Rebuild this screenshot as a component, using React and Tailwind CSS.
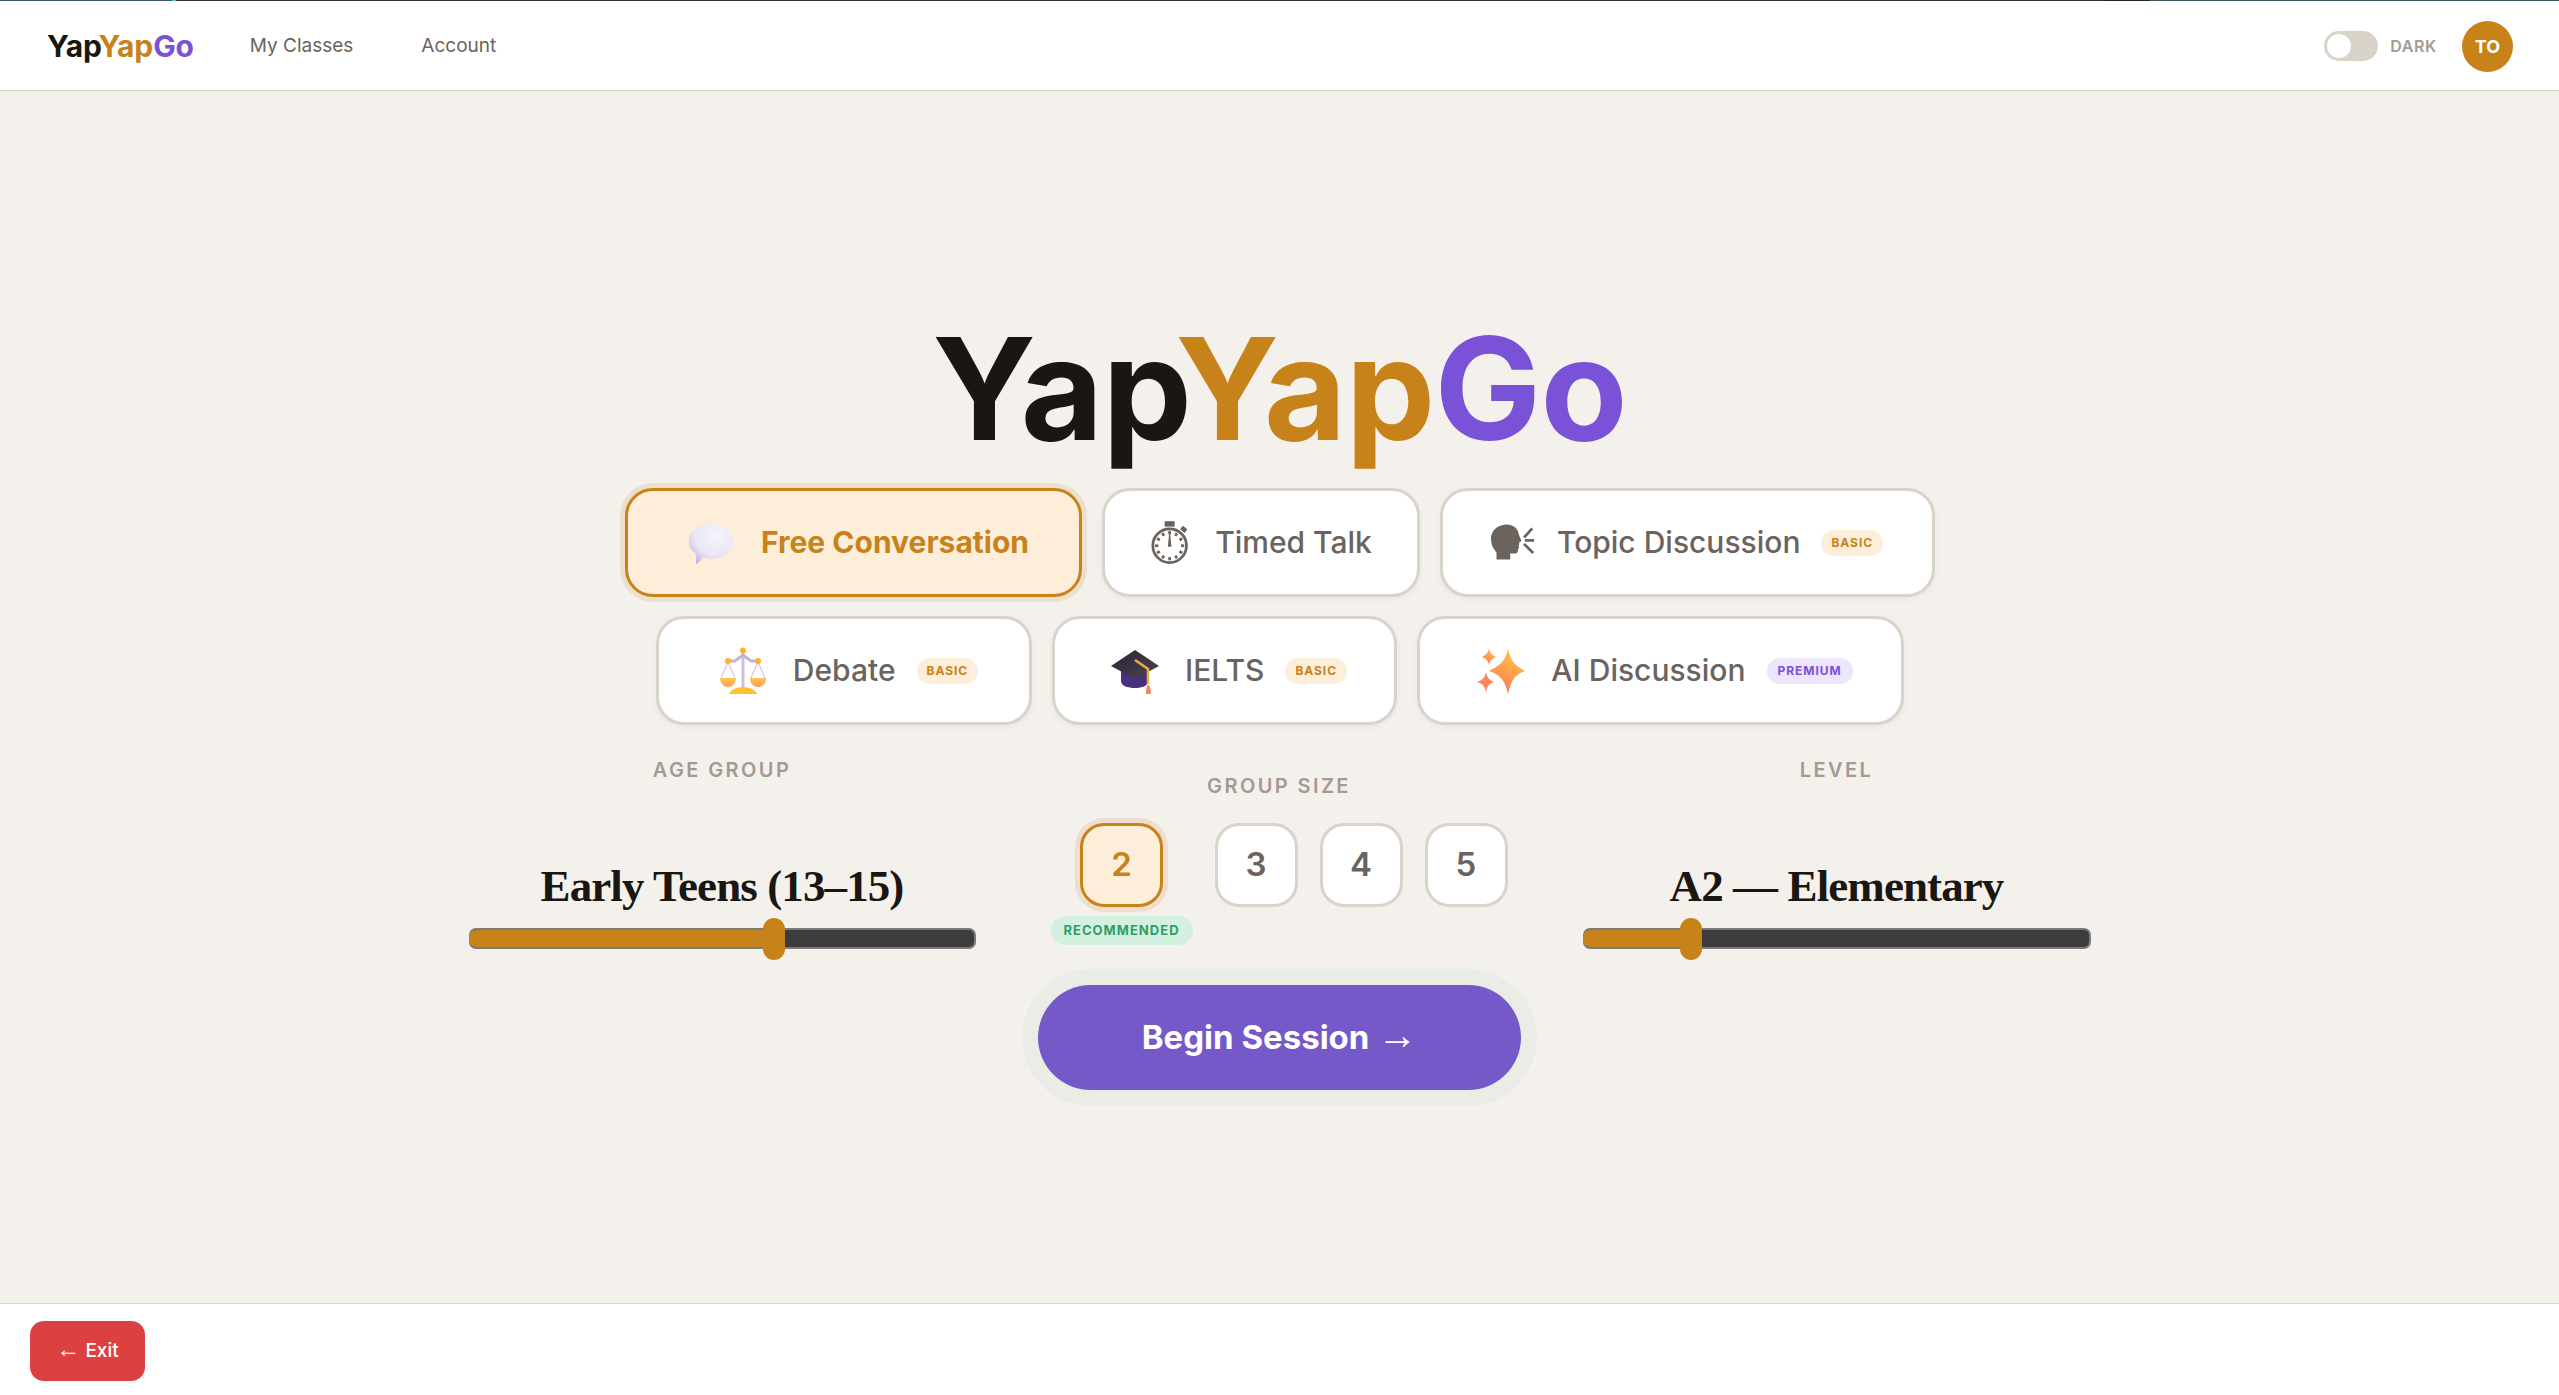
import { useState } from 'react';

const SANS = 'font-["Inter","Liberation_Sans",sans-serif]';

function Balloon() {
  return (
    <svg viewBox="0 0 48 48" className="w-[48px] h-[48px]">
      <defs>
        <radialGradient id="bal" cx="0.6" cy="0.3" r="0.8">
          <stop offset="0" stopColor="#f7f4fb" />
          <stop offset="0.6" stopColor="#ece6f6" />
          <stop offset="1" stopColor="#bfb0e4" />
        </radialGradient>
      </defs>
      <path d="M25 4C36 4 46 11 46 22C46 33 36 40 24 39.500C21 39.500 18 39 16 38C14 41 12 44 9 45C9 41 9 37 8.500 34.500C4 31 1 27 2 21C3 11 14 4 25 4Z" fill="url(#bal)" />
    </svg>
  );
}

function Stopwatch() {
  const ticks = Array.from({ length: 12 }, (_, i) => i * 30);
  return (
    <svg viewBox="0 0 44 48" className="w-[40px] h-[44px]" fill="none" stroke="#6b635d">
      <rect x="15" y="0" width="11" height="6" fill="#6b635d" stroke="none" />
      <path d="M35 5l5 4-3 4-5-4z" fill="#6b635d" stroke="none" />
      <circle cx="20.500" cy="27" r="18.500" strokeWidth="3" />
      {ticks.map((t) => (
        <line key={t} x1="20.500" y1="11" x2="20.500" y2="14.500" strokeWidth="3" transform={`rotate(${t} 20.500 27)`} />
      ))}
      <path d="M20.500 8L22.500 28H18.500z" fill="#6b635d" stroke="none" />
    </svg>
  );
}

function SpeakingHead() {
  return (
    <svg viewBox="0 0 48 40" className="w-[44px] h-[38px]" fill="#6b635d">
      <path d="M15 0C23 -1 29 4 30 9C30.500 12 32 14 33 17C33 19 31 19 30.500 19.500C31 21 31 22 30 23C31 24 30.500 26 29.500 26.500C30 30 28 32 24 31.500L21 31.500V38H6V30C3 27 0 22 0 15C0 7 6 1 15 0Z" />
      <path d="M45 4L36 14M47 17H37M46 31L36 21" stroke="#6b635d" strokeWidth="3" fill="none" />
    </svg>
  );
}

function Scales() {
  return (
    <svg viewBox="0 0 48 48" className="w-[48px] h-[48px]" fill="none">
      <defs>
        <linearGradient id="pan" x1="0" y1="0" x2="0" y2="1">
          <stop offset="0" stopColor="#ffc64d" />
          <stop offset="1" stopColor="#ff9e5e" />
        </linearGradient>
      </defs>
      <path d="M24 4V42" stroke="#cdbfd9" strokeWidth="3" />
      <path d="M9 14H16L24 8L32 14H39" stroke="#c2b2d4" strokeWidth="3" />
      <path d="M9 15L2 31M9 15L16 31M39 15L32 31M39 15L46 31" stroke="#d3c6de" strokeWidth="1.200" />
      <circle cx="24" cy="3.500" r="3" fill="#ffb02e" />
      <circle cx="9" cy="14" r="3" fill="#ffb02e" />
      <circle cx="39" cy="14" r="3" fill="#ffb02e" />
      <path d="M1 31H17C17 37 13 40 9 40C5 40 1 37 1 31Z" fill="url(#pan)" />
      <path d="M31 31H47C47 37 43 40 39 40C35 40 31 37 31 31Z" fill="url(#pan)" />
      <path d="M10 47C11 43 18 40 24 40C30 40 37 43 38 47Z" fill="#ffc22e" />
    </svg>
  );
}

function Cap() {
  return (
    <svg viewBox="0 0 48 48" className="w-[48px] h-[48px]" fill="none">
      <defs>
        <linearGradient id="capTop" x1="0" y1="0" x2="1" y2="1">
          <stop offset="0" stopColor="#2b2433" />
          <stop offset="1" stopColor="#4d4358" />
        </linearGradient>
      </defs>
      <path d="M10 20V34C10 39 17 41 24 41C31 41 37 39 37 34V20Z" fill="#4b2f7f" />
      <path d="M24 3L48 19L24 32L0 19Z" fill="url(#capTop)" />
      <path d="M24 13L37 22V37" stroke="#f0ab3c" strokeWidth="2.500" />
      <path d="M37 37C35 40 35 44 35 47H40C40 44 39.500 40 37 37Z" fill="#f08a5d" />
    </svg>
  );
}

function Sparkles() {
  return (
    <svg viewBox="0 0 48 48" className="w-[48px] h-[48px]">
      <defs>
        <linearGradient id="spark" x1="0.700" y1="0" x2="0.300" y2="1">
          <stop offset="0" stopColor="#ffc43f" />
          <stop offset="1" stopColor="#ff7a5c" />
        </linearGradient>
      </defs>
      <path d="M31 1C33 13 37 18 48 24C37 28 34 34 31 47C28 34 24 28 12 24C24 18 29 13 31 1Z" fill="url(#spark)" />
      <path d="M12 1C13 6 15 8 19 10C15 12 13 13 12 18C11 13 9 12 5 10C9 8 11 6 12 1Z" fill="url(#spark)" />
      <path d="M9 25C10 30 12 33 17 35C12 37 10 39 9 46C8 39 6 37 0 35C6 33 8 30 9 25Z" fill="#ff8560" />
    </svg>
  );
}

function Badge({ children, premium }) {
  return (
    <span
      className={`h-[26px] flex items-center rounded-full text-[12px] font-bold tracking-[0.08em] ${
        premium ? 'px-[11px] bg-[#ece5fb] text-[#7a52d8]' : 'px-[10px] bg-[#fdeeda] text-[#c8821a]'
      }`}
    >
      {children}
    </span>
  );
}

function ModeButton({ icon, label, badge, premium, active, width, tight }) {
  return (
    <button
      className={`h-[109px] ${width} ${tight ? '' : 'pl-[10px]'} shrink-0 flex items-center justify-center rounded-[28px] border-[3px] ${
        active
          ? 'bg-[#fdeeda] border-[#c8821a] text-[#c8821a] font-bold shadow-[0_0_0_5px_#ecdfcd]'
          : 'bg-white border-[#d9d3ca] text-[#6b635d] font-medium shadow-[0_2px_6px_rgba(0,0,0,0.05)]'
      }`}
    >
      <span className={`flex items-center justify-center ${tight ? 'w-[44px] mr-[22px]' : 'w-[48px] mr-[26px]'}`}>{icon}</span>
      <span className="text-[30px] whitespace-nowrap">{label}</span>
      {badge && (
        <span className="ml-[21px]">
          <Badge premium={premium}>{badge}</Badge>
        </span>
      )}
    </button>
  );
}

function SliderColumn({ label, value, fill, thumb, width }) {
  return (
    <div className={`${width} flex flex-col items-center`}>
      <div className="text-[20px] font-semibold tracking-[0.12em] text-[#a39a92] leading-[30px]">{label}</div>
      <div className="mt-[73px] font-['Liberation_Serif',serif] font-bold text-[#1a1612] text-[45px] leading-[56px] tracking-[-0.02em] whitespace-nowrap">
        {value}
      </div>
      <div className="relative w-full h-[21px] mt-[14px] rounded-[7px] bg-[#3c3c3c] border-2 border-[#7b7b7b]">
        <div className={`absolute left-[-2px] top-0 bottom-0 rounded-l-[7px] bg-[#c8821a] ${fill}`} />
        <div className={`absolute top-[-12px] w-[22px] h-[42px] rounded-full bg-[#c8821a] ${thumb}`} />
      </div>
    </div>
  );
}

function SizeButton({ n, active }) {
  return (
    <button
      className={`w-[83px] h-[84px] rounded-[24px] border-[3px] flex items-center justify-center text-[33px] font-semibold ${
        active
          ? 'bg-[#fdeeda] border-[#c8821a] text-[#c8821a] shadow-[0_0_0_5px_#ecdfcd]'
          : 'bg-white border-[#d9d3ca] text-[#6b635d]'
      }`}
    >
      {n}
    </button>
  );
}

export default function App() {
  const [dark] = useState(false);

  return (
    <div className={`${SANS} h-[1395px] flex flex-col bg-[#f4f1ec] overflow-hidden`}>
      <div className="h-px flex shrink-0">
        <div className="w-[172px] bg-[#3d5a66]" />
        <div className="w-[4px] bg-[#5bc0de]" />
        <div className="flex-1 bg-[#333]" />
        <div className="w-[45px] bg-[#222]" />
        <div className="w-[409px] bg-[#3e5560]" />
      </div>

      <header className="h-[90px] shrink-0 bg-white border-b border-[#d9d3ca] flex items-center pl-[47px] pr-[46px] pt-px">
        <div className="text-[30px] font-bold tracking-[-0.005em] leading-none mr-[56px]">
          <span className="text-[#1a1612]">Yap</span>
          <span className="text-[#c8821a]">Yap</span>
          <span className="text-[#7a52d8]">Go</span>
        </div>
        <nav className="flex gap-[68px] text-[19px] text-[#6b635d]">
          <a>My Classes</a>
          <a>Account</a>
        </nav>
        <div className="ml-auto flex items-center">
          <div className={`w-[54px] h-[30px] rounded-full ${dark ? 'bg-[#7a52d8]' : 'bg-[#d9d3ca]'} p-[3px] flex items-center`}>
            <div className="w-[24px] h-[24px] rounded-full bg-white" />
          </div>
          <span className="ml-[12px] text-[16px] font-semibold tracking-[0.04em] text-[#a39a92]">DARK</span>
          <div className="ml-[25px] w-[51px] h-[51px] rounded-full bg-[#c8821a] flex items-center justify-center text-white text-[18px] font-bold">
            TO
          </div>
        </div>
      </header>

      <main className="flex-1 flex flex-col items-center pt-[207px]">
        <h1 className="text-[142px] font-bold tracking-[-0.005em] leading-[180px]">
          <span className="text-[#1a1612]">Yap</span>
          <span className="text-[#c8821a]">Yap</span>
          <span className="text-[#7a52d8]">Go</span>
        </h1>

        <div className="mt-[10px] flex gap-[20px]">
          <ModeButton active icon={<Balloon />} label="Free Conversation" width="w-[457px]" />
          <ModeButton tight icon={<Stopwatch />} label="Timed Talk" width="w-[318px]" />
          <ModeButton tight icon={<SpeakingHead />} label="Topic Discussion" badge="BASIC" width="w-[495px]" />
        </div>
        <div className="mt-[19px] flex gap-[20px]">
          <ModeButton icon={<Scales />} label="Debate" badge="BASIC" width="w-[376px]" />
          <ModeButton icon={<Cap />} label="IELTS" badge="BASIC" width="w-[345px]" />
          <ModeButton icon={<Sparkles />} label="AI Discussion" badge="PREMIUM" premium width="w-[487px]" />
        </div>

        <div className="mt-[30px] flex items-start gap-[75px]">
          <SliderColumn width="w-[507px]" label="AGE GROUP" value="Early Teens (13–15)" fill="w-[298px]" thumb="left-[292px]" />

          <div className="flex flex-col items-center pt-[16px]">
            <div className="text-[20px] font-semibold tracking-[0.12em] text-[#a39a92] leading-[30px]">GROUP SIZE</div>
            <div className="mt-[22px] flex gap-[22px] items-start">
              <div className="w-[142px] flex flex-col items-center gap-[9px]">
                <SizeButton n={2} active />
                <span className="w-[142px] h-[29px] rounded-full bg-[#d3f0e1] text-[#2f9e63] text-[13px] font-bold tracking-[0.08em] flex items-center justify-center">
                  RECOMMENDED
                </span>
              </div>
              <SizeButton n={3} />
              <SizeButton n={4} />
              <SizeButton n={5} />
            </div>
          </div>

          <SliderColumn width="w-[508px]" label="LEVEL" value="A2 — Elementary" fill="w-[106px]" thumb="left-[95px]" />
        </div>

        <button className="mt-[36px] w-[483px] h-[105px] rounded-full bg-[#7559c8] text-white text-[33px] font-bold shadow-[0_0_0_16px_#eaece6]">
          Begin Session <span className="font-['Liberation_Sans',sans-serif] font-normal text-[40px] leading-none">→</span>
        </button>
      </main>

      <footer className="h-[92px] shrink-0 bg-white border-t border-[#d9d3ca] flex items-center pl-[30px] pt-[3px]">
        <button className="w-[115px] h-[60px] rounded-[14px] bg-[#dc4040] text-white text-[19px] font-medium">
          <span className="font-['Liberation_Sans',sans-serif] font-normal text-[24px] leading-none">←</span> Exit
        </button>
      </footer>
    </div>
  );
}
